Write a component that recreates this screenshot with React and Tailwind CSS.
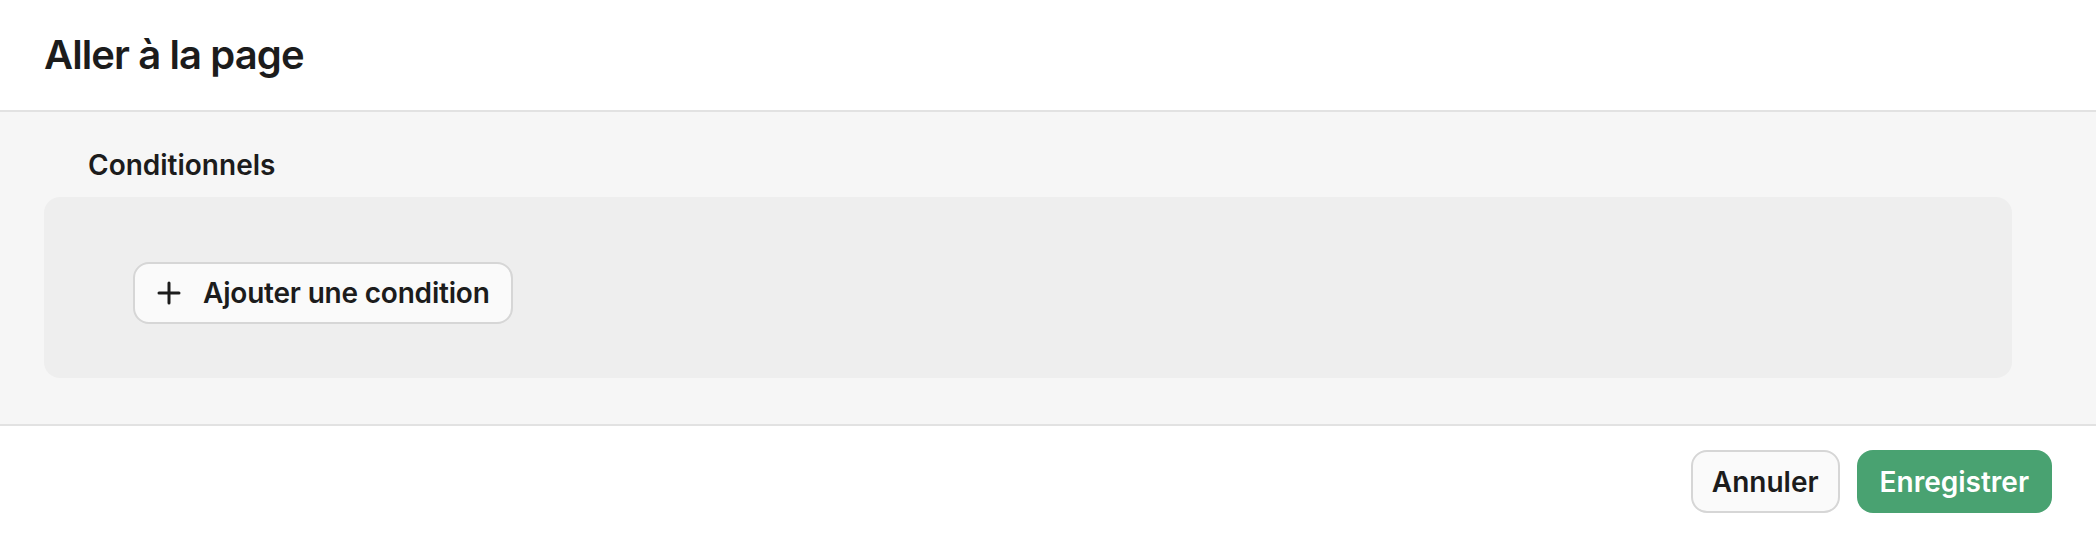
export default function App() {
  return (
    <div className="w-[2096px] h-[536px] flex flex-col bg-white font-['Inter','Liberation_Sans',sans-serif] text-[#1c1c1c]">
      <header className="h-[112px] shrink-0 border-b-[2px] border-[#e2e2e2] flex items-center pl-[44px]">
        <h1 className="text-[40px] leading-[48px] font-semibold tracking-[-0.9px]">Aller à la page</h1>
      </header>
      <main className="flex-1 bg-[#f6f6f6] pt-[33px] pl-[44px] pr-[84px]">
        <div className="ml-[44px] text-[28px] leading-[40px] font-semibold">Conditionnels</div>
        <div className="mt-[12px] h-[181px] rounded-[16px] bg-[#eeeeee] pl-[89px] pt-[65px]">
          <button className="h-[62px] flex items-center gap-[22px] pl-[22px] pr-[21px] rounded-[16px] border-[2px] border-[#d6d6d6] bg-[#fafafa] text-[28px] font-semibold tracking-[-0.2px] text-[#1c1c1c]">
            <svg width="24" height="24" viewBox="0 0 24 24" fill="none" stroke="#1c1c1c" strokeWidth="3" strokeLinecap="round">
              <line x1="12" y1="2" x2="12" y2="22" />
              <line x1="2" y1="12" x2="22" y2="12" />
            </svg>
            <span>Ajouter une condition</span>
          </button>
        </div>
      </main>
      <footer className="h-[112px] shrink-0 border-t-[2px] border-[#e2e2e2] flex items-center justify-end gap-[17px] pr-[44px]">
        <button className="h-[63px] px-[19px] pt-[2px] rounded-[16px] border-[2px] border-[#d6d6d6] bg-[#fafafa] text-[28px] font-semibold text-[#1c1c1c]">Annuler</button>
        <button className="h-[63px] px-[23px] pt-[2px] rounded-[16px] bg-[#49a271] text-[28px] font-semibold text-white">Enregistrer</button>
      </footer>
    </div>
  );
}
